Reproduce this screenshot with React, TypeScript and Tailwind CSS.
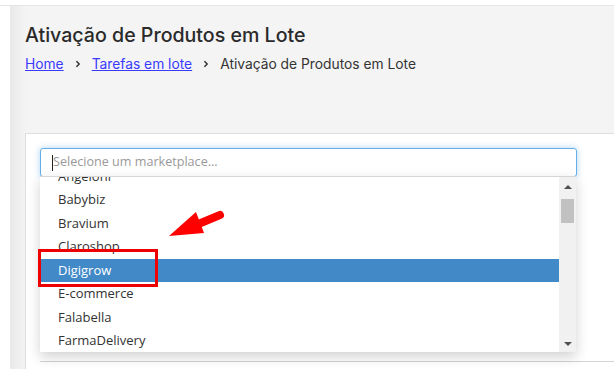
import React from 'react';

const marketplaces = ['Angeloni', 'Babybiz', 'Bravium', 'Claroshop', 'Digigrow', 'E-commerce', 'Falabella', 'FarmaDelivery', 'Farmácia'];

const Chevron = () => (
  <svg viewBox="0 0 10 10" className="w-[8px] h-[8px] mx-[10px]" fill="none" stroke="#333" strokeWidth="1.8">
    <path d="M3 1.5 L6.5 5 L3 8.5" />
  </svg>
);

export default function App() {
  return (
    <div className="w-[614px] h-[369px] overflow-hidden bg-white flex flex-col" style={{ fontFamily: 'Inter, sans-serif' }}>
      {/* top strip */}
      <div className="h-[6px] shrink-0 border-b border-[#e6e6e6] bg-white" />

      <div className="flex flex-1 min-h-0">
        <div className="w-[10px] shrink-0 bg-white" />

        {/* main area */}
        <div className="relative flex-1 bg-[#f4f4f4] pl-[15px] flex flex-col">
          <div className="absolute left-0 top-0 bottom-0 w-[16px] bg-gradient-to-r from-[#e9e9e9] to-[#f4f4f4]" />

          <h1 className="relative mt-[17px] text-[19.6px] leading-[24px] font-medium text-[#2a2a2a]">
            Ativação de Produtos em Lote
          </h1>

          <nav className="relative mt-[8px] flex items-center text-[13.8px] leading-[18px] text-[#333]">
            <a className="text-[#3a3aff] underline">Home</a>
            <Chevron />
            <a className="text-[#3a3aff] underline">Tarefas em lote</a>
            <Chevron />
            <span>Ativação de Produtos em Lote</span>
          </nav>

          {/* card */}
          <div className="relative mt-[60px] flex-1 bg-white border-t border-l border-[#dedede] pl-[14px] pt-[14px]">
            <div className="relative w-[537px]">
              <div className="h-[29px] rounded-[3px] border border-[#66afe9] shadow-[0_0_6px_rgba(102,175,233,0.55)] bg-white flex items-center pl-[11px]" style={{ fontFamily: '"Open Sans", sans-serif' }}>
                <span className="w-px h-[16px] bg-[#222]" />
                <span className="text-[12.6px] text-[#999]">Selecione um marketplace...</span>
              </div>

              {/* dropdown list */}
              <div className="absolute left-0 top-[28px] w-[536px] h-[176px] bg-white border-t border-[#d6d6d6] shadow-[0_5px_12px_rgba(0,0,0,0.18)] flex overflow-hidden z-10" style={{ fontFamily: '"Open Sans", sans-serif' }}>
                <div className="flex-1 overflow-hidden">
                  <div className="mt-[-12.5px]">
                    {marketplaces.map(m => (
                      <div
                        key={m}
                        className={`h-[23.5px] flex items-center pl-[18px] text-[13px] ${m === 'Digigrow' ? 'bg-[#4189c7] text-white' : 'text-[#333]'}`}
                      >
                        {m}
                      </div>
                    ))}
                  </div>
                </div>
                {/* scrollbar */}
                <div className="w-[17px] bg-[#f1f1f1] flex flex-col items-center">
                  <svg viewBox="0 0 8 4" className="w-[8px] h-[4px] mt-[8px]" fill="#505050"><path d="M0 4 L4 0 L8 4 Z" /></svg>
                  <div className="w-[13px] h-[24px] bg-[#c1c1c1] mt-[10px]" />
                  <div className="flex-1" />
                  <svg viewBox="0 0 8 4" className="w-[8px] h-[4px] mb-[6px]" fill="#505050"><path d="M0 0 L8 0 L4 4 Z" /></svg>
                </div>
              </div>
            </div>

            <div className="mt-[184px] h-px bg-[#d4d4d4]" />
          </div>

          {/* annotations */}
          <div className="absolute left-[28px] top-[243px] w-[120px] h-[38px] border-[3px] border-[#ee0000] z-20" />
          <svg className="absolute left-[140px] top-[194px] z-20" width="80" height="45" viewBox="150 200 80 45">
            <path d="M220 215 L196 225" stroke="#ff0000" strokeWidth="8" strokeLinecap="round" />
            <path d="M169 236 L196 212 L204 233 Z" fill="#ff0000" />
          </svg>
        </div>
      </div>
    </div>
  );
}
